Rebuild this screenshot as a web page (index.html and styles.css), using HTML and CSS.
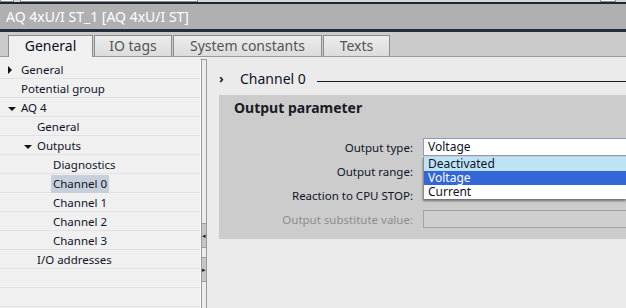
FILE: index.html
```html
<!DOCTYPE html>
<html lang="en">
<head>
  <meta charset="UTF-8">
  <title>AQ 4xU/I ST_1 properties</title>
  <link rel="stylesheet" href="styles.css">
</head>
<body>
  <!-- cut-off toolbar above the inspector -->
  <div class="topstrip">
    <span class="stub stub-a"></span>
    <span class="stub stub-b"></span>
    <span class="stub stub-c"></span>
  </div>

  <div class="titlebar">AQ 4xU/I ST_1 [AQ 4xU/I ST]</div>

  <div class="tabbar">
    <div class="tab active">General</div>
    <div class="tab tab-io">IO tags</div>
    <div class="tab tab-sys">System constants</div>
    <div class="tab tab-texts">Texts</div>
  </div>

  <div class="main">
    <!-- Navigation tree -->
    <ul class="tree">
      <li class="row lvl0"><span class="arrow closed"></span>General</li>
      <li class="row lvl0">Potential group</li>
      <li class="row lvl0"><span class="arrow open"></span>AQ 4</li>
      <li class="row lvl1">General</li>
      <li class="row lvl1"><span class="arrow open"></span>Outputs</li>
      <li class="row lvl2">Diagnostics</li>
      <li class="row lvl2"><span class="selected">Channel 0</span></li>
      <li class="row lvl2">Channel 1</li>
      <li class="row lvl2">Channel 2</li>
      <li class="row lvl2">Channel 3</li>
      <li class="row lvl1">I/O addresses</li>
      <li class="row"></li>
      <li class="row"></li>
    </ul>

    <div class="splitter">
      <div class="split-btn left">&#9666;</div>
      <div class="split-btn right">&#9656;</div>
    </div>

    <!-- Parameter area -->
    <div class="content">
      <div class="heading">
        <span class="chevron">&#8250;</span>
        <span class="heading-text">Channel 0</span>
        <span class="heading-line"></span>
      </div>

      <div class="section">
        <div class="section-title">Output parameter</div>
        <div class="fields">
          <div class="field">
            <label>Output type:</label>
            <div class="select">Voltage
              <ul class="dropdown">
                <li class="hover">Deactivated</li>
                <li class="chosen">Voltage</li>
                <li>Current</li>
              </ul>
            </div>
          </div>
          <div class="field">
            <label>Output range:</label>
            <div class="select"></div>
          </div>
          <div class="field">
            <label>Reaction to CPU STOP:</label>
            <div class="select"></div>
          </div>
          <div class="field disabled">
            <label>Output substitute value:</label>
            <div class="input"></div>
          </div>
        </div>
      </div>
    </div>
  </div>
</body>
</html>
```

FILE: styles.css
```css
body {
  margin: 0;
  width: 626px;
  height: 308px;
  overflow: hidden;
  font-family: "Noto Sans", "Open Sans", sans-serif;
  font-size: 11.5px;
  color: #0f1428;
  background: #ebebeb;
}
.topstrip {
  height: 2px;
  background: #d6d6d6;
  position: relative;
}
.stub {
  position: absolute;
  top: 0;
  height: 1px;
  border: 1px solid #8c8c8c;
  border-top: none;
  background: #fafafa;
}
.stub-a { left: 0; width: 12px; }
.stub-b { left: 20px; width: 176px; }
.stub-c { left: 600px; width: 14px; }
.titlebar {
  height: 25px;
  line-height: 25px;
  border-top: 2px solid #1f2538;
  border-bottom: 3px solid #262c40;
  background: #b0b0b0;
  color: #fff;
  font-size: 14px;
  padding-left: 6px;
}
.tabbar {
  height: 21px;
  padding: 3px 0 0 8px;
  background: #cbcbcb;
  border-bottom: 1px solid #9a9a9a;
  display: flex;
}
.tab {
  height: 20px;
  line-height: 20px;
  border: 1px solid #8c8c8c;
  border-bottom: none;
  margin-right: 1px;
  background: linear-gradient(#ececec, #dcdcdc);
  color: #555;
  font-size: 14px;
  text-align: center;
}
.tab.active {
  width: 83px;
  height: 21px;
  margin-bottom: -1px;
  background: #f0f0f0;
  color: #0a0f1e;
}
.tab-io { width: 76px; }
.tab-sys { width: 147px; }
.tab-texts { width: 65px; }
.main {
  display: flex;
  height: 251px;
}
.tree {
  list-style: none;
  margin: 0;
  padding: 3px 0 0;
  width: 200px;
  background: #f0f0f0;
}
.row {
  height: 17px;
  padding-top: 1px;
  line-height: 18px;
  border-bottom: 1px solid #e2e2e2;
  position: relative;
  white-space: nowrap;
}
.lvl0 { padding-left: 21px; }
.lvl1 { padding-left: 37px; }
.lvl2 { padding-left: 53px; }
.arrow {
  position: absolute;
  width: 0;
  height: 0;
}
.lvl0 .arrow { left: 8px; }
.lvl1 .arrow { left: 24px; }
.arrow.closed {
  border-top: 4px solid transparent;
  border-bottom: 4px solid transparent;
  border-left: 4px solid #111;
  top: 6px;
}
.arrow.open {
  border-left: 4px solid transparent;
  border-right: 4px solid transparent;
  border-top: 4px solid #111;
  top: 9px;
}
.selected {
  display: inline-block;
  margin-left: -2px;
  padding: 0 2px;
  background: #c7d0da;
}
.splitter {
  margin-top: 2px;
  border-left: 1px solid #fdfdfd;
  border-top: 1px solid #9a9a9a;
  background: linear-gradient(to right, #9a9a9a 1px, #ececec 1px, #ececec 5px, #9a9a9a 5px);
  width: 6px;
  position: relative;
}
.split-btn {
  position: absolute;
  left: 1px;
  width: 4px;
  height: 23px;
  line-height: 23px;
  font-size: 7px;
  text-align: center;
  color: #222;
  background: #c6c6c6;
  border-top: 1px solid #a0a0a0;
  border-bottom: 1px solid #a0a0a0;
}
.split-btn.left { top: 163px; }
.split-btn.right { top: 197px; }
.content {
  flex: 1;
  padding-left: 12px;
  background: #ebebeb;
}
.heading {
  display: flex;
  align-items: center;
  height: 20px;
  margin-top: 11px;
}
.chevron {
  width: 21px;
  font-size: 13px;
  font-weight: bold;
  color: #222;
}
.heading-text {
  font-size: 14px;
  color: #0f1428;
}
.heading-line {
  flex: 1;
  margin: 6px 0 0 11px;
  border-top: 1px solid #1a1a1a;
}
.section {
  margin-top: 7px;
  height: 144px;
  background: #cccccc;
}
.section-title {
  padding: 3px 0 0 15px;
  font-size: 14px;
  font-weight: bold;
  color: #1a1a24;
}
.fields {
  margin-top: 18px;
}
.field {
  display: flex;
  align-items: center;
  height: 24px;
}
.field label {
  width: 194px;
  text-align: right;
  font-size: 11.5px;
}
.field.disabled label {
  color: #8e8e8e;
}
.select, .input {
  position: relative;
  margin-left: 10px;
  flex: 1;
  height: 16px;
  line-height: 16px;
  padding-left: 4px;
  font-size: 12px;
}
.field:first-child .select {
  background: #fff;
  border: 1px solid #8a9bbd;
  border-right: none;
}
.input {
  border: 1px solid #a3a3a3;
  border-right: none;
  background: #cfcfcf;
}
.dropdown {
  position: absolute;
  left: -1px;
  right: 0;
  top: 18px;
  margin: 0;
  padding: 0;
  list-style: none;
  background: #fff;
  border-left: 1px solid #8c8c8c;
  box-shadow: 0 2px 2px rgba(0, 0, 0, 0.45);
  z-index: 2;
}
.dropdown li {
  height: 14px;
  line-height: 14px;
  padding-left: 4px;
}
.dropdown .hover { background: #bde3f7; }
.dropdown .chosen { background: #3366d6; color: #fff; }
```
